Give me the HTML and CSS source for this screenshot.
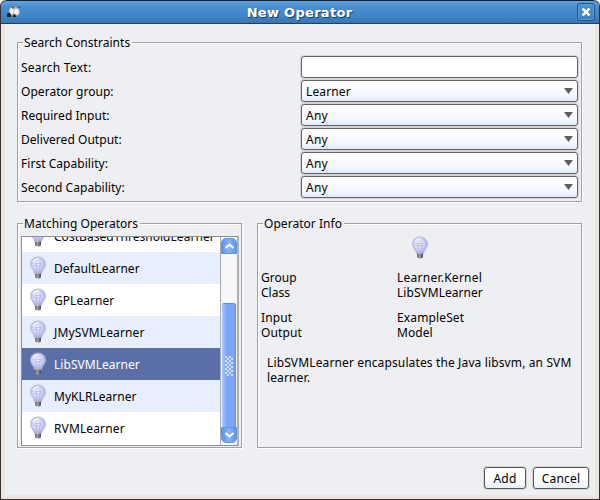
FILE: index.html
```
<!DOCTYPE html>
<html lang="en">
<head>
<meta charset="utf-8">
<title>New Operator</title>
<link rel="stylesheet" href="styles.css">
</head>
<body>
<svg width="0" height="0" class="defs">
  <defs>
    <radialGradient id="glass" cx="45%" cy="42%" r="60%">
      <stop offset="0" stop-color="#eeeefd"/><stop offset=".55" stop-color="#d0cffa"/><stop offset="1" stop-color="#a4a4e6"/>
    </radialGradient>
    <linearGradient id="cap"><stop offset="0" stop-color="#777"/><stop offset=".4" stop-color="#ccc"/><stop offset="1" stop-color="#444"/></linearGradient>
    <symbol id="bulb" viewBox="0 0 18 24">
      <path d="M9 1C4.600 1 1.500 4 1.500 8.200C1.500 12 4.900 13.600 5.500 17.500H12.500C13.100 13.600 16.500 12 16.500 8.200C16.500 4 13.400 1 9 1Z" fill="url(#glass)" stroke="#b4b4d6" stroke-width=".8"/>
      <path d="M4 6Q6 2.500 10 3" fill="none" stroke="#fff" stroke-width="1.300" opacity=".8"/>
      <path d="M7.500 17V11L6 7.500H12L10.500 11V17M6 9.500H12" fill="none" stroke="#b5b1d4" stroke-width=".7"/>
      <path d="M6 17.500H12V21L10.500 22.500H7.500L6 21Z" fill="url(#cap)"/>
      <path d="M6 19H12M6.500 21H11.500" stroke="#555" stroke-width=".8"/>
    </symbol>
  </defs>
</svg>
<div class="window">
  <header class="titlebar">
    <svg class="logo" width="16" height="14" viewBox="0 0 16 14">
      <path d="M2 8L4 3L8 1L12 3L14 6L13 10L9 11L3 10Z" fill="#b4baba"/>
      <path d="M4 4L6 3L8 5L7 9L4 8Z" fill="#f1f3f2"/><path d="M9 4L12 4L13 8L10 10L8 8Z" fill="#f6f6f4"/>
      <path d="M1 9L3 7L5 10L5 12H1ZM7 10L9 9L10 11V12H7Z" fill="#22201e"/>
      <path d="M5 2L8 1L9 2L7 4ZM11 2L15 1.500V3H12Z" fill="#5d6568"/>
    </svg>
    <h1>New Operator</h1>
    <span class="close"><svg width="8" height="8" viewBox="0 0 8 8"><path d="M.5 .5L7.500 7.500M7.500 .5L.5 7.500" stroke="#fff" stroke-width="2.500"/></svg></span>
  </header>
  <main class="content">
    <section class="group search">
      <h2>Search Constraints</h2>
      <div class="row"><span class="wide">Search Text:</span><div class="field"></div></div>
      <div class="row"><span>Operator group:</span><div class="field combo"><span class="loose">Learner</span><svg class="arrow" width="9" height="6"><path d="M0 0H9L4.500 6Z"/></svg></div></div>
      <div class="row"><span>Required Input:</span><div class="field combo"><span class="wide">Any</span><svg class="arrow" width="9" height="6"><path d="M0 0H9L4.500 6Z"/></svg></div></div>
      <div class="row"><span>Delivered Output:</span><div class="field combo"><span class="wide">Any</span><svg class="arrow" width="9" height="6"><path d="M0 0H9L4.500 6Z"/></svg></div></div>
      <div class="row"><span>First Capability:</span><div class="field combo"><span class="wide">Any</span><svg class="arrow" width="9" height="6"><path d="M0 0H9L4.500 6Z"/></svg></div></div>
      <div class="row"><span>Second Capability:</span><div class="field combo"><span class="wide">Any</span><svg class="arrow" width="9" height="6"><path d="M0 0H9L4.500 6Z"/></svg></div></div>
    </section>
    <div class="panels">
      <section class="group matching">
        <h2>Matching Operators</h2>
        <div class="list">
          <ul>
            <li><svg width="18" height="24"><use href="#bulb"/></svg><span>CostBasedThresholdLearner</span></li>
            <li><svg width="18" height="24"><use href="#bulb"/></svg><span>DefaultLearner</span></li>
            <li><svg width="18" height="24"><use href="#bulb"/></svg><span>GPLearner</span></li>
            <li><svg width="18" height="24"><use href="#bulb"/></svg><span class="loose">JMySVMLearner</span></li>
            <li class="selected"><svg width="18" height="24"><use href="#bulb"/></svg><span>LibSVMLearner</span></li>
            <li><svg width="18" height="24"><use href="#bulb"/></svg><span>MyKLRLearner</span></li>
            <li><svg width="18" height="24"><use href="#bulb"/></svg><span class="loose">RVMLearner</span></li>
          </ul>
          <div class="scroll">
            <span class="sbtn up"><svg width="9" height="6"><path d="M.5 5L4.500 1.500L8.500 5" fill="none" stroke="#fff" stroke-width="2"/></svg></span>
            <div class="track"><div class="thumb"><i class="grip"></i></div></div>
            <span class="sbtn down"><svg width="9" height="6"><path d="M.5 1L4.500 4.500L8.500 1" fill="none" stroke="#fff" stroke-width="2"/></svg></span>
          </div>
        </div>
      </section>
      <section class="group info">
        <h2>Operator Info</h2>
        <svg class="bulb" width="18" height="24"><use href="#bulb"/></svg>
        <dl>
          <dt>Group</dt><dd class="wide">Learner.Kernel</dd>
          <dt>Class</dt><dd>LibSVMLearner</dd>
        </dl>
        <dl>
          <dt class="loose">Input</dt><dd class="loose">ExampleSet</dd>
          <dt class="loose">Output</dt><dd>Model</dd>
        </dl>
        <p class="loose">LibSVMLearner encapsulates the Java libsvm, an SVM<br>learner.</p>
      </section>
    </div>
    <footer><button class="add">Add</button><button class="cancel">Cancel</button></footer>
  </main>
</div>
</body>
</html>
```
FILE: styles.css
```
* { box-sizing: border-box; }
body { margin: 0; width: 600px; height: 500px; overflow: hidden; background: #fff; color: #000; font: 12px/15px "Noto Sans", sans-serif; letter-spacing: .04px; white-space: nowrap; }
h1, h2, ul, dl, dd, p { margin: 0; padding: 0; font-size: inherit; font-weight: normal; }
svg { display: block; flex: none; }
.loose { letter-spacing: .13px; }
.wide { letter-spacing: .25px; }
.defs { position: absolute; }
.window { width: 600px; height: 500px; border: 1px solid #37302f; border-top: 0; border-radius: 6px 6px 0 0; background: #ebe5df; overflow: hidden; display: flex; flex-direction: column; }
.titlebar { height: 24px; flex: none; display: flex; align-items: center; justify-content: space-between; padding: 0 4px 0 5px; border-top: 1px solid #1b1f27; border-bottom: 1px solid #233f61; background: linear-gradient(#62a3e0, #4a8fd0 25%, #4186c9 65%, #3a76b1); border-radius: 6px 6px 0 0; }
.titlebar h1 { font: bold 13px/20px "DejaVu Sans", sans-serif; letter-spacing: .3px; color: #fff; text-shadow: 1px 1px 1px #173a62; padding-top: 2px; }
.close { width: 18px; height: 18px; border: 1px solid #24527f; border-radius: 3px; display: grid; place-items: center; box-shadow: inset 0 0 0 1px #5b9bd8; }
.content { flex: 1; margin: 0 4px 4px; background: #eeeff3; padding: 18px 12px 0; display: flex; flex-direction: column; }
.group { border: 1px solid #a0a0a4; box-shadow: 1px 1px 0 #fff, inset 1px 1px 0 #fff; position: relative; }
.group h2 { position: absolute; top: -8px; left: 5px; padding: 0 2px 0 1px; background: #eeeff3; height: 15px; }
.search { height: 160px; width: 565px; padding: 12px 3px 0; }
.row { height: 24px; display: flex; justify-content: space-between; align-items: center; }
.field { width: 277px; height: 22px; border: 1px solid #646464; border-radius: 3px; background: #fff; box-shadow: 0 0 0 1px #d6d6d6; display: flex; align-items: center; justify-content: space-between; padding: 0 4px; }
.combo { background: linear-gradient(#fff, #f7f9ff 60%, #edf3ff 85%, #dce8ff); }
.arrow { fill: #5e5e5e; }
.panels { display: flex; gap: 15px; margin-top: 21px; }
.matching { width: 225px; height: 225px; padding: 12px 2px 0 3px; }
.list { width: 218px; height: 210px; border: 1px solid #8e8e92; border-right: 2px solid #b0b0b3; background: #fff; display: flex; overflow: hidden; }
.list ul { flex: 1; min-width: 0; list-style: none; margin-top: -17px; }
.list li { height: 32px; display: flex; align-items: center; gap: 7px; padding-left: 7px; }
.list li:nth-child(even) { background: #e7eeff; }
.list li.selected { background: #5a6fa8; color: #fff; }
.scroll { width: 17px; border-left: 1px solid #aaa; display: flex; flex-direction: column; background: #f7f7f7; padding: 1px 0 2px; }
.sbtn { height: 16px; flex: none; background: linear-gradient(90deg, #5b95e8, #8ab4f5 50%, #5b95e8); display: grid; place-items: center; }
.up { border-radius: 5px 5px 0 0; border: 1px solid #5f94df; }
.down { border-radius: 0 0 5px 5px; border: 1px solid #5f94df; }
.track { flex: 1; display: flex; flex-direction: column; justify-content: flex-end; padding: 0 1px; }
.thumb { height: 124px; background: linear-gradient(90deg, #a8c8ff, #7aa5f8 35%, #7aa5f8 85%, #5f8de0); border-top: 1px solid #5f8de0; border-radius: 2px 2px 0 0; display: grid; place-items: center; }
.grip { width: 8px; height: 20px; background: radial-gradient(circle at 1px 1px, #d5e5ff 0.7px, transparent 1px) 0 0 / 4px 4px, radial-gradient(circle at 1px 1px, #d5e5ff 0.7px, transparent 1px) 2px 2px / 4px 4px; }
.info { width: 325px; height: 225px; padding: 12px 0 0 3px; }
.info .bulb { margin-left: 150px; }
.info dl { display: grid; grid-template-columns: 136px 1fr; margin-top: 10px; }
.info p { margin: 15px 0 0 6px; }
footer { display: flex; justify-content: flex-end; gap: 7px; margin: 19px -6px 0 0; }
button { height: 22px; padding: 0; border: 1px solid #555; border-radius: 3px; box-shadow: 0 0 0 1px #d6d6d6; background: linear-gradient(#fff, #f9fbff 60%, #e7efff); font: inherit; letter-spacing: .2px; color: #000; }
.add { width: 42px; }
.cancel { width: 56px; }
```
